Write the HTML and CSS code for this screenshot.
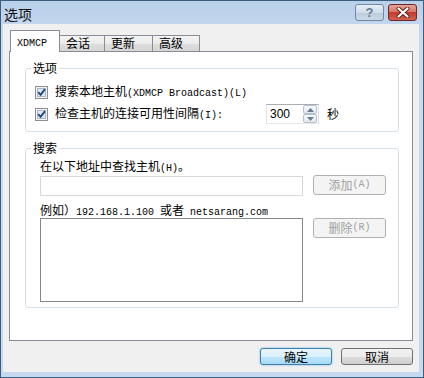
FILE: index.html
```html
<!DOCTYPE html>
<html lang="zh-CN">
<head>
<meta charset="utf-8">
<title>选项</title>
<link rel="stylesheet" href="styles.css">
</head>
<body>
<div class="window">
  <div class="titlebar">
    <span class="title">选项</span>
    <div class="caption-btns">
      <div class="cbtn help">?</div>
      <div class="cbtn close">
        <svg width="14" height="11" viewBox="0 0 14 11"><path d="M2.5 1.5 L11.5 9.5 M11.5 1.5 L2.5 9.5" stroke="#5a1d18" stroke-width="4" stroke-linecap="round"/><path d="M2.5 1.5 L11.5 9.5 M11.5 1.5 L2.5 9.5" stroke="#fff" stroke-width="2.2" stroke-linecap="round"/></svg>
      </div>
    </div>
  </div>
  <div class="client">
    <div class="tabs">
      <div class="tab active"><span class="lat">XDMCP</span></div>
      <div class="tab">会话</div>
      <div class="tab">更新</div>
      <div class="tab">高级</div>
    </div>
    <div class="panel">
      <fieldset class="group g1">
        <legend>选项</legend>
        <div class="row r1">
          <span class="cb"><svg width="13" height="13" viewBox="0 0 13 13"><rect x="0.5" y="0.5" width="12" height="12" fill="#f4f4f4" stroke="#8e8f8f"/><rect x="2.5" y="2.5" width="8" height="8" fill="#dce8f5" stroke="#aab8c8"/><path d="M3.2 6.2 L5.6 8.8 L10 3.2" fill="none" stroke="#24467c" stroke-width="1.9"/></svg></span>
          <span>搜索本地主机<span class="lat">(XDMCP Broadcast)(L)</span></span>
        </div>
        <div class="row r2">
          <span class="cb"><svg width="13" height="13" viewBox="0 0 13 13"><rect x="0.5" y="0.5" width="12" height="12" fill="#f4f4f4" stroke="#8e8f8f"/><rect x="2.5" y="2.5" width="8" height="8" fill="#dce8f5" stroke="#aab8c8"/><path d="M3.2 6.2 L5.6 8.8 L10 3.2" fill="none" stroke="#24467c" stroke-width="1.9"/></svg></span>
          <span class="lbl2">检查主机的连接可用性间隔<span class="lat">(I):</span></span>
          <div class="spin">
            <span class="val">300</span>
            <div class="arrows">
              <div class="arr"><svg width="7" height="4" viewBox="0 0 7 4"><path d="M0 4 L3.5 0 L7 4 Z" fill="#6a7a90"/></svg></div>
              <div class="arr"><svg width="7" height="4" viewBox="0 0 7 4"><path d="M0 0 L3.5 4 L7 0 Z" fill="#6a7a90"/></svg></div>
            </div>
          </div>
          <span class="unit">秒</span>
        </div>
      </fieldset>
      <fieldset class="group g2">
        <legend>搜索</legend>
        <div class="line l1">在以下地址中查找主机<span class="lat">(H)</span>。</div>
        <div class="frow">
          <div class="textbox"></div>
          <div class="btn disabled">添加<span class="lat">(A)</span></div>
        </div>
        <div class="line l2">例如）<span class="lat">192.168.1.100 </span>或者<span class="lat"> netsarang.com</span></div>
        <div class="frow lrow">
          <div class="listbox"></div>
          <div class="btn disabled">删除<span class="lat">(R)</span></div>
        </div>
      </fieldset>
    </div>
    <div class="footer">
      <div class="btn dlg default">确定</div>
      <div class="btn dlg">取消</div>
    </div>
  </div>
</div>
</body>
</html>
```

FILE: styles.css
```css
html, body {
  margin: 0;
  padding: 0;
}
body {
  width: 424px;
  height: 378px;
  overflow: hidden;
  font-family: "Noto Sans CJK SC", "Liberation Sans", sans-serif;
  font-size: 12px;
  line-height: 14px;
  color: #000;
  background: #fff;
}
.lat {
  font-family: "Liberation Mono", monospace;
  font-size: 10px;
}
.window {
  width: 424px;
  height: 378px;
  box-sizing: border-box;
  border: 1px solid #3b5f80;
  padding: 0 4px 5px 2px;
  background: linear-gradient(#b9d0ea, #c9dbef 40px, #c6d9ee);
  display: flex;
  flex-direction: column;
}
.titlebar {
  height: 23px;
  display: flex;
  justify-content: space-between;
  align-items: flex-start;
}
.title {
  font-size: 14px;
  line-height: 16px;
  margin-top: 5px;
  margin-left: 1px;
  color: #111;
}
.caption-btns {
  display: flex;
  gap: 4px;
  padding-top: 3px;
  padding-right: 2px;
}
.cbtn {
  height: 17px;
  box-sizing: border-box;
  border-radius: 3px;
  display: flex;
  align-items: center;
  justify-content: center;
}
.help {
  width: 29px;
  border: 1px solid #7088a6;
  background: linear-gradient(#e7eef6, #d2deeb 50%, #bccbdc 51%, #cbd8e6);
  color: #6a7c92;
  font-family: "Liberation Sans", sans-serif;
  font-weight: bold;
  font-size: 13px;
}
.close {
  width: 29px;
  border: 1px solid #6b2a25;
  background: linear-gradient(#e8a297, #d6786a 45%, #c4392c 50%, #d2614f);
}
.client {
  flex: 1;
  background: #f0f0f0;
  padding: 6px 6px 0 6px;
  display: flex;
  flex-direction: column;
}
.tabs {
  display: flex;
  align-items: flex-end;
  height: 21px;
  margin-left: 1px;
}
.tab {
  box-sizing: border-box;
  height: 16px;
  padding-left: 6px;
  line-height: 14px;
  border-top: 1px solid #898c95;
  border-right: 1px solid #898c95;
  background: linear-gradient(#f4f4f4, #ebebeb 50%, #dddddd 51%, #d6d6d6);
}
.tab:nth-child(2) { width: 45px; }
.tab:nth-child(3) { width: 48px; }
.tab:nth-child(4) { width: 47px; }
.tab.active {
  width: 50px;
  height: 22px;
  margin-bottom: -1px;
  position: relative;
  z-index: 1;
  background: #fff;
  border-left: 1px solid #898c95;
  padding-left: 6px;
  padding-top: 4px;
  line-height: 12px;
}
.panel {
  box-sizing: border-box;
  height: 290px;
  border: 1px solid #898c95;
  background: #fff;
}
.group {
  border: 1px solid #d5dfe5;
  border-radius: 3px;
  min-width: 0;
}
.group legend {
  padding: 0 2px;
  line-height: 14px;
}
.g1 {
  margin: 9px 13px 0 15px;
  padding: 9px 0 7px 9px;
}
.g1 legend { margin-left: -4px; }
.g2 {
  margin: 9px 13px 0 15px;
  padding: 4px 0 5px 14px;
}
.g2 legend { margin-left: -9px; }
.row {
  display: flex;
  align-items: center;
}
.r1 { height: 16px; }
.r2 { height: 20px; margin-top: 4px; }
.cb {
  width: 13px;
  height: 13px;
  margin-right: 7px;
  display: flex;
}
.lbl2 { width: 211px; }
.spin {
  width: 53px;
  height: 20px;
  box-sizing: border-box;
  border: 1px solid #abadb3;
  border-left-color: #e2e3ea;
  border-right-color: #dbdfe6;
  border-bottom-color: #e3e9ef;
  background: #fff;
  display: flex;
  align-items: center;
}
.val {
  font-family: "Liberation Sans", sans-serif;
  font-size: 12px;
  padding-left: 3px;
}
.arrows {
  margin-left: auto;
  margin-right: 1px;
  width: 14px;
  display: flex;
  flex-direction: column;
}
.arr {
  height: 9px;
  box-sizing: border-box;
  border: 1px solid #b8c0cc;
  border-radius: 2px;
  background: linear-gradient(#f8fafc, #e3e9f1);
  display: flex;
  align-items: center;
  justify-content: center;
}
.unit { margin-left: 8px; }
.line { height: 14px; white-space: nowrap; }
.frow {
  display: flex;
  align-items: flex-start;
  margin-top: 2px;
}
.textbox {
  width: 263px;
  height: 20px;
  margin-top: 1px;
  box-sizing: border-box;
  border: 1px solid #d6d8dc;
  background: #fff;
}
.btn {
  box-sizing: border-box;
  width: 73px;
  height: 20px;
  margin-left: 10px;
  border: 1px solid #adb2b5;
  border-radius: 3px;
  background: #f4f4f4;
  display: flex;
  align-items: center;
  justify-content: center;
  line-height: 14px;
}
.btn.disabled { color: #a0a0a0; }
.l2 { margin-top: 7px; }
.lrow { margin-top: 1px; }
.listbox {
  width: 263px;
  height: 84px;
  box-sizing: border-box;
  border: 1px solid #828790;
  background: #fff;
}
.footer {
  display: flex;
  justify-content: flex-end;
  gap: 9px;
  padding-top: 7px;
}
.btn.dlg {
  width: 72px;
  height: 17px;
  margin-left: 0;
  border: 1px solid #707070;
  background: linear-gradient(#f2f2f2, #ebebeb 50%, #dddddd 51%, #cfcfcf);
}
.btn.default {
  border-color: #3c7fb1;
  background: linear-gradient(#eaf6fd, #d9f0fc 50%, #bee6fd 51%, #a7d9f5);
  box-shadow: 0 0 2px #5fb0e2;
}
```
